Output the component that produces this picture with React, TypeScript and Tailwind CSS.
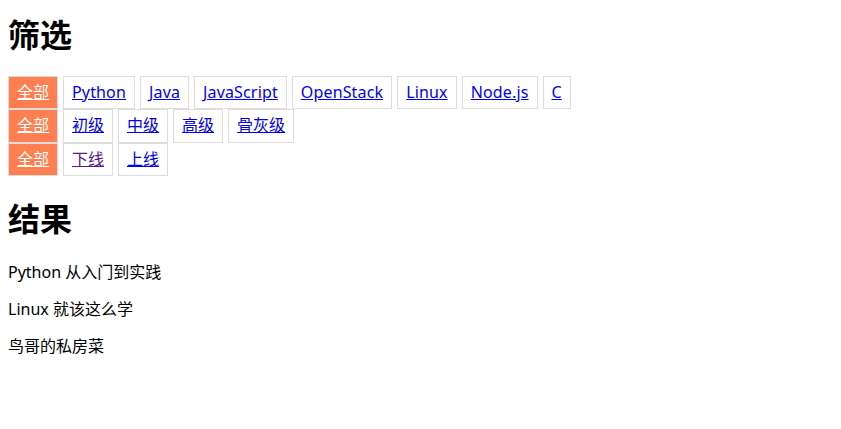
import clsx from 'clsx'

const languages = ['Python', 'Java', 'JavaScript', 'OpenStack', 'Linux', 'Node.js', 'C']
const levels = ['初级', '中级', '高级', '骨灰级']
const states = [
  { label: '下线', visited: true },
  { label: '上线', visited: false },
]

const results = ['Python 从入门到实践', 'Linux 就该这么学', '鸟哥的私房菜']

function AllTag() {
  return (
    <a
      href="#"
      className="block border border-[#dddddd] bg-[#ff7f50] px-2 py-[5px] leading-[21.3px] text-white underline"
    >
      全部
    </a>
  )
}

function Tag({ label, visited, latin }: { label: string; visited?: boolean; latin?: boolean }) {
  return (
    <a
      href="#"
      className={clsx(
        'block border border-[#dddddd] px-2 py-[5px] leading-[21.3px] underline',
        visited ? 'text-[#551a8b]' : 'text-[#0000ee]',
        latin && 'tracking-[0.15px]'
      )}
    >
      {label}
    </a>
  )
}

export default function App() {
  return (
    <main className="min-h-screen bg-white px-2 text-base text-black font-['Noto_Sans','Noto_Sans_CJK_SC',sans-serif]">
      {/* 筛选 */}
      <h1 className="pt-[14px] mb-[20px] text-[32px] font-bold leading-[42px]">筛选</h1>

      <div className="flex flex-col">
        <div className="flex gap-[5px]">
          <AllTag />
          {languages.map((l) => (
            <Tag key={l} label={l} latin />
          ))}
        </div>
        <div className="flex gap-[5px]">
          <AllTag />
          {levels.map((l) => (
            <Tag key={l} label={l} />
          ))}
        </div>
        <div className="flex gap-[5px]">
          <AllTag />
          {states.map((s) => (
            <Tag key={s.label} label={s.label} visited={s.visited} />
          ))}
        </div>
      </div>

      {/* 结果 */}
      <h1 className="mt-[22px] text-[32px] font-bold leading-[42px]">结果</h1>

      <div className="mt-[22px] flex flex-col gap-4">
        {results.map((r) => (
          <p key={r} className="leading-[21px]">
            {r}
          </p>
        ))}
      </div>
    </main>
  )
}
